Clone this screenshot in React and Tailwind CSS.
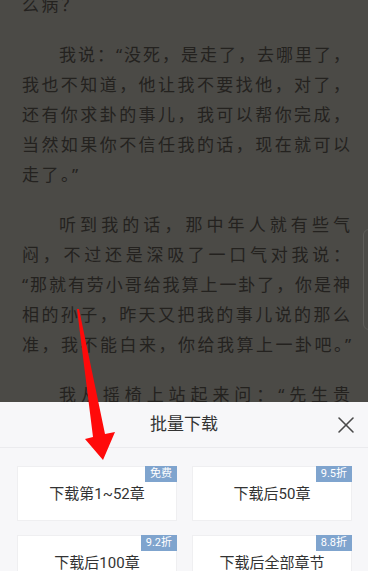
import React from 'react'
import { X } from 'lucide-react'

const paragraphs = [
  { first: false, lines: ['么病？'], lastJustify: false },
  {
    first: true,
    lines: [
      '我说：“没死，是走了，去哪里了，',
      '我也不知道，他让我不要找他，对了，',
      '还有你求卦的事儿，我可以帮你完成，',
      '当然如果你不信任我的话，现在就可以',
      '走了。”',
    ],
    lastJustify: false,
  },
  {
    first: true,
    lines: [
      '听到我的话，那中年人就有些气',
      '闷，不过还是深吸了一口气对我说：',
      '“那就有劳小哥给我算上一卦了，你是神',
      '相的孙子，昨天又把我的事儿说的那么',
      '准，我不能白来，你给我算上一卦吧。”',
    ],
    lastJustify: false,
  },
  { first: true, lines: ['我从摇椅上站起来问：“先生贵'], lastJustify: true },
]

const options = [
  { label: '下载第1~52章', badge: '免费' },
  { label: '下载后50章', badge: '9.5折' },
  { label: '下载后100章', badge: '9.2折' },
  { label: '下载后全部章节', badge: '8.8折' },
]

function Paragraph({ p }) {
  return (
    <div className="mb-[20px]">
      {p.lines.map((line, i) => {
        const isLast = i === p.lines.length - 1
        const justify = !isLast || p.lastJustify
        return (
          <div
            key={i}
            className={`whitespace-nowrap ${i === 0 && p.first ? 'pl-[37px]' : ''} ${
              justify ? 'text-justify [text-align-last:justify]' : 'tracking-[2.5px]'
            }`}
          >
            {line}
          </div>
        )
      })}
    </div>
  )
}

export default function App() {
  return (
    <div
      lang="zh-CN"
      className="relative w-[368px] h-[571px] overflow-hidden bg-[#4b4a46] flex flex-col"
      style={{ fontFamily: '"Noto Sans", "Noto Sans CJK SC", sans-serif' }}
    >
      {/* reading text */}
      <div className="h-[402px] shrink-0 overflow-hidden pl-[22px] pr-[18px]">
        <div className="mt-[-10.5px] text-[17px] leading-[30px] text-[#24221f]">
          {paragraphs.map((p, i) => (
            <Paragraph key={i} p={p} />
          ))}
        </div>
      </div>

      {/* scroll handle */}
      <div className="absolute left-[363px] top-[229px] w-[14px] h-[101px] rounded-[6px] border border-[#5c5b57]" />

      {/* bottom sheet */}
      <div
        className="flex-1 bg-[#f7f7f9] flex flex-col"
        style={{ fontFamily: 'Roboto, "Noto Sans CJK SC", sans-serif' }}
      >
        <div className="relative h-[46px] flex items-center justify-center border-b border-[#ebebee]">
          <span className="text-[17px] text-[#333333]">批量下载</span>
          <X className="absolute right-[8px] w-[28px] h-[28px] text-[#4a4a4a]" strokeWidth={1.3} />
        </div>
        <div className="grid grid-cols-2 gap-x-[15px] gap-y-[14px] pl-[17px] pr-[16px] pt-[18px]">
          {options.map((o) => (
            <div
              key={o.label}
              className="relative h-[55px] bg-white border border-[#efeff1] flex items-center justify-center pt-[2px] text-[15px] text-[#333333]"
            >
              {o.label}
              <span className="absolute top-[-1px] right-[-1px] h-[16px] px-[5px] bg-[#7fa4ce] text-white text-[11px] leading-[16px]">
                {o.badge}
              </span>
            </div>
          ))}
        </div>
      </div>

      {/* red annotation arrow */}
      <svg
        className="absolute inset-0 pointer-events-none"
        width="368"
        height="571"
        viewBox="0 0 368 571"
      >
        <polygon
          points="77,309 79,309 105,434 115,432 103,460 85,439 93,437"
          fill="#ff0a0a"
        />
      </svg>
    </div>
  )
}
